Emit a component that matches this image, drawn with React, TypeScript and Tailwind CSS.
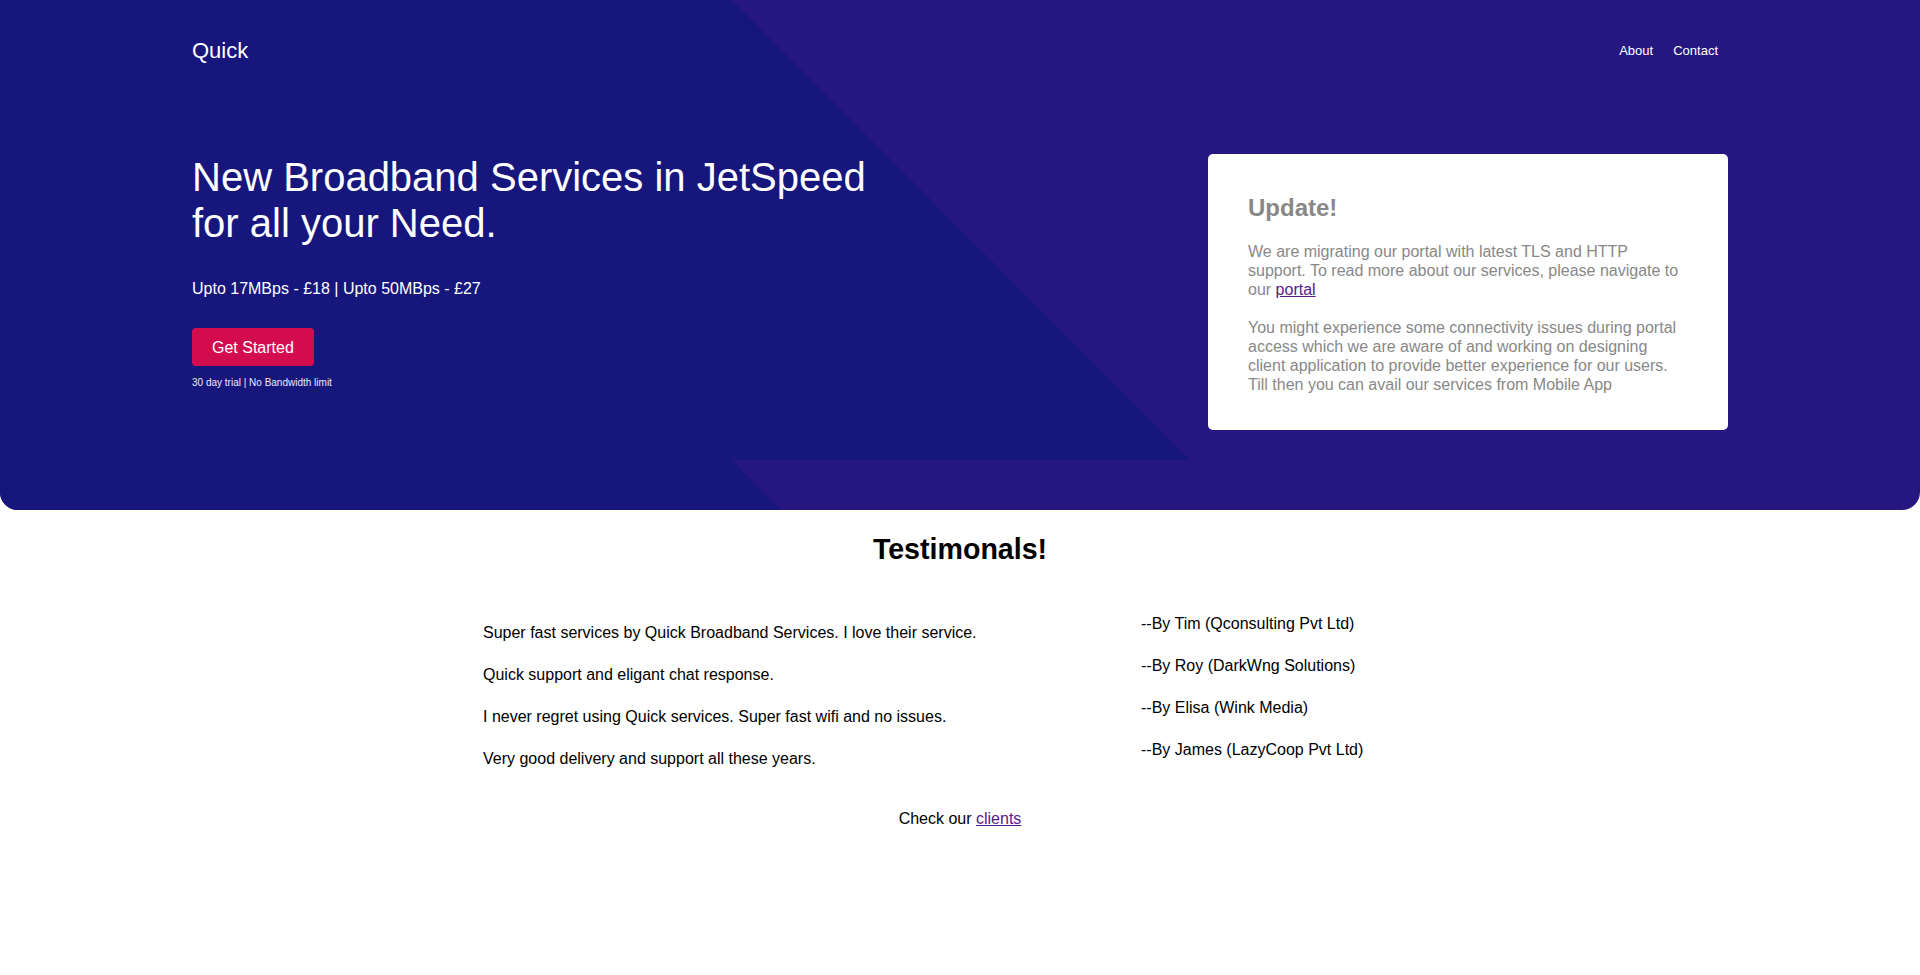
const testimonials = [
  {
    text: "Super fast services by Quick Broadband Services. I love their service.",
    by: "--By Tim (Qconsulting Pvt Ltd)",
  },
  { text: "Quick support and eligant chat response.", by: "--By Roy (DarkWng Solutions)" },
  {
    text: "I never regret using Quick services. Super fast wifi and no issues.",
    by: "--By Elisa (Wink Media)",
  },
  { text: "Very good delivery and support all these years.", by: "--By James (LazyCoop Pvt Ltd)" },
];

const Hero = () => {
  return (
    <section className="relative h-[510px] overflow-hidden rounded-b-[18px] bg-[#25177f] text-white">
      {/* background shape */}
      <svg
        className="absolute inset-0 h-full w-full"
        viewBox="0 0 1920 510"
        preserveAspectRatio="none"
      >
        <polygon
          points="0,0 732,0 1190,460 732,460 781,510 0,510"
          fill="#16167c"
        />
      </svg>

      <div className="relative mx-auto max-w-[1536px]">
        {/* Header */}
        <header className="flex items-center justify-between pt-[38px]">
          <span className="text-[22px] leading-[25px]">Quick</span>
          <nav className="flex">
            <a href="#" className="px-[10px] text-[13px] leading-[15px]">
              About
            </a>
            <a href="#" className="px-[10px] text-[13px] leading-[15px]">
              Contact
            </a>
          </nav>
        </header>

        {/* Content */}
        <div className="mt-[91px] flex items-start justify-between">
          <div className="flex flex-col items-start">
            <h1 className="max-w-[720px] text-[40px] font-normal leading-[46px]">
              New Broadband Services in JetSpeed for all your Need.
            </h1>
            <p className="mt-[33px] text-[16px] leading-[19px]">
              Upto 17MBps - £18 | Upto 50MBps - £27
            </p>
            <button className="mt-[30px] flex h-[38px] items-center rounded-[4px] bg-[#d30c50] px-[20px] text-[16px] leading-[19px] text-white">
              Get Started
            </button>
            <span className="mt-[11px] text-[10px] leading-[12px] text-[#ecebff]">
              30 day trial | No Bandwidth limit
            </span>
          </div>

          <div className="w-[520px] rounded-[5px] bg-white px-[40px] pb-[36px] pt-[40px] text-[#888888]">
            <h2 className="text-[24px] font-bold leading-[28px]">Update!</h2>
            <p className="mt-[20px] text-[16px] leading-[19px]">
              We are migrating our portal with latest TLS and HTTP
              <br />
              support. To read more about our services, please navigate to
              <br />
              our{" "}
              <a href="#" className="text-[#551a8b] underline">
                portal
              </a>
              <br />
              <br />
              You might experience some connectivity issues during portal
              <br />
              access which we are aware of and working on designing
              <br />
              client application to provide better experience for our users.
              <br />
              Till then you can avail our services from Mobile App
            </p>
          </div>
        </div>
      </div>
    </section>
  );
};

const Testimonials = () => {
  return (
    <section className="text-black">
      <h2 className="mt-[23px] text-center text-[28.6px] font-bold leading-[32px]">
        Testimonals!
      </h2>

      <div className="mx-auto mt-[49px] flex w-[960px] flex-col">
        {testimonials.map((t) => (
          <div key={t.by} className="flex h-[42px] items-start">
            <span className="mt-[9px] w-[661px] shrink-0 pl-[3px] text-[16px] leading-[19px]">
              {t.text}
            </span>
            <span className="text-[16px] leading-[19px]">{t.by}</span>
          </div>
        ))}
      </div>

      <p className="mt-[27px] text-center text-[16px] leading-[19px]">
        Check our{" "}
        <a href="#" className="text-[#551a8b] underline">
          clients
        </a>
      </p>
    </section>
  );
};

export default function App() {
  return (
    <div className="min-h-screen bg-white font-['Liberation_Sans',Arial,sans-serif]">
      <Hero />
      <Testimonials />
    </div>
  );
}
